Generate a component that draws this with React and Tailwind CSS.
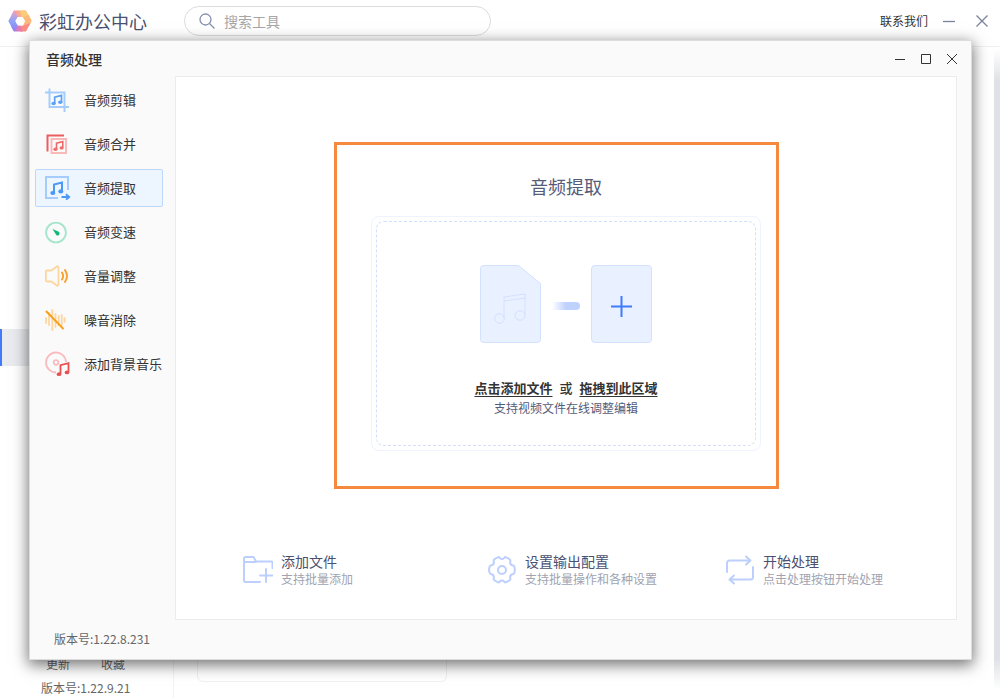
import React, { useState } from "react";

function Logo() {
  return (
    <svg width="24" height="24" viewBox="0 0 24 24">
      <defs>
        <linearGradient id="warm" x1="0" y1="0" x2="1" y2="0">
          <stop offset="0" stopColor="#f793a4" />
          <stop offset="1" stopColor="#fcbf78" />
        </linearGradient>
        <linearGradient id="cool" x1="0" y1="0" x2="0" y2="1">
          <stop offset="0" stopColor="#f3a0c0" />
          <stop offset="0.5" stopColor="#8fa5f8" />
          <stop offset="1" stopColor="#8a7cf2" />
        </linearGradient>
        <linearGradient id="base" x1="0" y1="0" x2="1" y2="0">
          <stop offset="0" stopColor="#a277f0" />
          <stop offset="1" stopColor="#f7809a" />
        </linearGradient>
      </defs>
      <path d="M6 1.500h12l-3 6.500H9L3.500 6z" fill="url(#warm)" />
      <path d="M12 1.500h6l5.500 9.500-7.500 1-2.500-4z" fill="#fccb7c" />
      <path d="M20.500 6l3.200 6L21 17l-6-.5 2-4.500-2-4z" fill="#fdb97c" />
      <path d="M22.500 14L18 22.500h-6L10 16.500h4.500z" fill="#f98d86" />
      <path d="M15 22.500H6L3 17.500l6-3 1.500 2H13z" fill="url(#base)" />
      <path d="M6 1.500L.3 12 6 22.500l3.500-6L7.500 12 10 8z" fill="url(#cool)" />
      <path d="M9.800 8h4.900l2.300 4-2.300 4.500H9.800L7.400 12z" fill="#fff" />
    </svg>
  );
}

function CutIcon() {
  return (
    <svg width="24" height="24" viewBox="0 0 24 24" fill="none">
      <path d="M4.500.500v18.500H24M0 4.500h19.500V24" stroke="#a5cdfb" strokeWidth="2" />
      <path d="M9.700 15.500V9.200l6.800-1.800v6.600" stroke="#5aa2f8" strokeWidth="1.700" />
      <ellipse cx="8.600" cy="15.500" rx="2.200" ry="1.800" fill="#5aa2f8" />
      <ellipse cx="15.300" cy="14.200" rx="2.200" ry="1.800" fill="#5aa2f8" />
    </svg>
  );
}

function MergeIcon() {
  return (
    <svg width="24" height="24" viewBox="0 0 24 24" fill="none">
      <path d="M2.500 19.500v-16H19" stroke="#ee5d5d" strokeWidth="2" />
      <rect x="6.500" y="7" width="14.500" height="14" stroke="#f9b9b9" strokeWidth="2" />
      <path d="M11.500 17v-5.800l6.300-1.600v6" stroke="#f26b6b" strokeWidth="1.600" />
      <ellipse cx="10.500" cy="17.200" rx="2.100" ry="1.700" fill="#f26b6b" />
      <ellipse cx="16.600" cy="15.900" rx="2.100" ry="1.700" fill="#f26b6b" />
    </svg>
  );
}

function ExtractIcon() {
  return (
    <svg width="26" height="24" viewBox="0 0 26 24" fill="none">
      <path d="M23 14V1H1v21h12" stroke="#a5cdfb" strokeWidth="2" />
      <path d="M9 17.200V8.600l8-2v8.800" stroke="#4b98f7" strokeWidth="2" />
      <ellipse cx="7.800" cy="17" rx="2.500" ry="2.100" fill="#4b98f7" />
      <ellipse cx="15.800" cy="15.400" rx="2.500" ry="2.100" fill="#4b98f7" />
      <path d="M16.500 21h7.500m-3-2.700l3.200 2.700-3.200 2.700" stroke="#4b98f7" strokeWidth="1.800" />
    </svg>
  );
}

function SpeedIcon() {
  return (
    <svg width="24" height="24" viewBox="0 0 24 24" fill="none">
      <circle cx="11" cy="12.500" r="9.900" stroke="#a5e5cb" strokeWidth="1.800" />
      <path d="M7.500 9l6.300 2.800a1.900 1.900 0 01-2.500 3.200z" fill="#12b877" />
    </svg>
  );
}

function VolumeIcon() {
  return (
    <svg width="24" height="24" viewBox="0 0 24 24" fill="none" strokeLinecap="round" strokeLinejoin="round">
      <path
        d="M2 6.500h4.500l5.300-4c.8-.6 1.700 0 1.700 1v17c0 1-.9 1.600-1.700 1l-5.300-4H2A1.200 1.200 0 01.900 16V7.800A1.200 1.200 0 012 6.500z"
        stroke="#fcd6a0"
        strokeWidth="1.800"
      />
      <path d="M17 8.500q2.200 3.500 0 7M20 6q4 6 0 12" stroke="#fa9f2a" strokeWidth="1.900" />
    </svg>
  );
}

function NoiseIcon() {
  return (
    <svg width="24" height="24" viewBox="0 0 24 24" fill="none" strokeLinecap="round">
      <path
        d="M1 10v5M4 5v12M7.300 2v20M10.500 6v13M13.700 8v9M16.700 7v10M19.500 10v4"
        stroke="#fcd6a0"
        strokeWidth="1.800"
      />
      <path d="M1.500 3.500l16.500 17" stroke="#fa9f1a" strokeWidth="1.900" />
    </svg>
  );
}

function MusicIcon() {
  return (
    <svg width="26" height="26" viewBox="0 0 26 26" fill="none">
      <path d="M21 11A10 10 0 1011 21.500" stroke="#f8bcc0" strokeWidth="1.800" />
      <circle cx="11" cy="11.500" r="2.300" stroke="#f8bcc0" strokeWidth="1.700" />
      <path d="M15.500 23v-8.800l8-2v9" stroke="#e8504f" strokeWidth="1.800" />
      <ellipse cx="14" cy="23.200" rx="2.300" ry="1.900" fill="#e8504f" />
      <ellipse cx="22" cy="21.400" rx="2.300" ry="1.900" fill="#e8504f" />
    </svg>
  );
}

const menu = [
  { name: "音频剪辑", icon: <CutIcon /> },
  { name: "音频合并", icon: <MergeIcon /> },
  { name: "音频提取", icon: <ExtractIcon /> },
  { name: "音频变速", icon: <SpeedIcon /> },
  { name: "音量调整", icon: <VolumeIcon /> },
  { name: "噪音消除", icon: <NoiseIcon /> },
  { name: "添加背景音乐", icon: <MusicIcon /> },
];

const steps = [
  {
    title: "添加文件",
    text: "支持批量添加",
    icon: (
      <>
        <path d="M17 27H2.500A1.500 1.500 0 011 25.500v-22A1.500 1.500 0 012.500 2h8L13 6.500h15.500a1 1 0 011 1V13M1 7h12" />
        <path d="M23 14v13M17 20.500h13" />
      </>
    ),
  },
  {
    title: "设置输出配置",
    text: "支持批量操作和各种设置",
    icon: (
      <>
        <path d="M10.500 2.500q1.500-.9 2.500.6 2 2 4 0 1-1.500 2.500-.6l3 1.700q1.300.9.700 2.300-.5 3.200 2.300 3.800 1.800.1 2 1.700l.3 3-.3 2.500q-.2 1.600-2 1.700-2.800.6-2.300 3.800.6 1.400-.7 2.300l-3 1.700q-1.500.9-2.500-.6-2-2-4 0-1 1.500-2.500.6l-3-1.700q-1.300-.9-.7-2.300.5-3.200-2.300-3.800-1.800-.1-2-1.700L2 15l.5-3q.2-1.600 2-1.700 2.800-.6 2.300-3.800-.6-1.400.7-2.300z" />
        <circle cx="15" cy="15" r="4" />
      </>
    ),
  },
  {
    title: "开始处理",
    text: "点击处理按钮开始处理",
    icon: (
      <>
        <path d="M2 17V8a2.500 2.500 0 012.500-2.500H25M21 1.500l4.500 4-4.500 4" />
        <path d="M28 12v10a2.500 2.500 0 01-2.500 2.500H5M9 20.500l-4.500 4 4.500 4" />
      </>
    ),
  },
];

function AudioWindow() {
  const [active, setActive] = useState("音频提取");

  return (
    <section className="absolute top-[40px] right-[28px] bottom-[38px] left-[29px] flex flex-col border border-[#dcdcdc] bg-[#fafafa] shadow-[0_4px_14px_1px_rgba(0,0,0,0.55)]">
      <div className="flex h-[35px] shrink-0 items-center justify-between pr-[13px] pl-4">
        <h2 className="text-sm font-medium text-[#333]">音频处理</h2>
        <div className="flex items-center gap-[14px] text-[#333]">
          <button aria-label="最小化">
            <svg width="12" height="12" stroke="currentColor">
              <path d="M1 6.500h10" />
            </svg>
          </button>
          <button aria-label="最大化">
            <svg width="12" height="12" stroke="currentColor" fill="none">
              <path d="M1.500 1.500h9v9h-9z" />
            </svg>
          </button>
          <button aria-label="关闭">
            <svg width="12" height="12" stroke="currentColor">
              <path d="M1 1l10 10M11 1L1 11" />
            </svg>
          </button>
        </div>
      </div>

      <div className="flex flex-1">
        <nav className="flex w-[145px] shrink-0 flex-col gap-[6px] pt-[5px] pr-3 pl-[5px]">
          {menu.map((item) => (
            <button
              key={item.name}
              onClick={() => setActive(item.name)}
              className={
                item.name === active
                  ? "flex h-[38px] items-center rounded-xs border border-[#bbd8fb] bg-[#edf5ff] pl-[9px] text-[13px] whitespace-nowrap text-[#333]"
                  : "flex h-[38px] items-center rounded-xs border border-transparent pl-[9px] text-[13px] whitespace-nowrap text-[#333]"
              }
            >
              <span className="w-[39px] shrink-0">{item.icon}</span>
              {item.name}
            </button>
          ))}
        </nav>

        <main className="mr-[14px] flex flex-1 flex-col border border-[#ececec] bg-white">
          <div className="mt-[95px] flex justify-center">
            <div className="relative w-1/2">
              <h1 className="text-center text-lg text-[#555b78]">音频提取</h1>
              <div className="mt-4 rounded-lg border border-[#eff3fe] p-1">
                <div className="flex flex-col items-center rounded-lg border border-dashed border-[#d3dffc] pt-[43px] pb-[27px]">
                  <div className="flex items-center gap-[11px]">
                    <svg width="61" height="78" viewBox="0 0 61 78" fill="none" stroke="#d3e0fe">
                      <path
                        d="M3.500.500h35l22 18v56a3 3 0 01-3 3h-54a3 3 0 01-3-3v-71a3 3 0 013-3z"
                        fill="#e9f0ff"
                      />
                      <circle cx="19.500" cy="53.500" r="4.800" />
                      <circle cx="40" cy="50.500" r="4.800" />
                      <path d="M24 53V32l21-3v21M24 36l21-3" />
                    </svg>
                    <span className="mt-1 h-2 w-7 rounded-r-full bg-linear-to-r from-white via-[#bfd2fd] via-50% to-[#bfd2fd]"></span>
                    <button
                      aria-label="添加文件"
                      className="flex h-[78px] w-[61px] items-center justify-center rounded-sm border border-[#d3e0fe] bg-[#e9f0ff] pt-1"
                    >
                      <svg width="21" height="21" stroke="#3f7bfb" strokeWidth="2">
                        <path d="M10.500 0v21M0 10.500h21" />
                      </svg>
                    </button>
                  </div>
                  <p className="mt-[35px] flex items-center gap-[7px] text-[13px] leading-5 font-bold text-[#333]">
                    <a href="#add" className="underline underline-offset-3">
                      点击添加文件
                    </a>
                    <span className="font-medium">或</span>
                    <a href="#drop" className="underline underline-offset-3">
                      拖拽到此区域
                    </a>
                  </p>
                  <p className="text-xs leading-5 text-[#555b78]">支持视频文件在线调整编辑</p>
                </div>
              </div>
              <div className="pointer-events-none absolute -top-[30px] -right-[18px] -bottom-[38px] -left-[37px] border-3 border-[#f58a3f]"></div>
            </div>
          </div>

          <ul className="mt-auto mb-[31px] grid grid-cols-[244fr_238fr_231fr] pl-[67px]">
            {steps.map((step) => (
              <li key={step.title} className="flex items-center gap-2">
                <svg
                  width="30"
                  height="30"
                  viewBox="0 0 30 30"
                  fill="none"
                  stroke="#bccffd"
                  strokeWidth="2"
                  strokeLinecap="round"
                  strokeLinejoin="round"
                >
                  {step.icon}
                </svg>
                <div>
                  <h3 className="text-sm leading-[18px] text-[#4a5070]">{step.title}</h3>
                  <p className="text-xs leading-[18px] text-[#a0a3b0]">{step.text}</p>
                </div>
              </li>
            ))}
          </ul>
        </main>
      </div>

      <footer className="flex h-[39px] shrink-0 items-center px-6 pb-[2px] text-xs text-[#666]">版本号:1.22.8.231</footer>
    </section>
  );
}

function App() {
  return (
    <div className="relative flex h-screen flex-col overflow-hidden bg-white font-['Noto_Sans_CJK_SC',sans-serif]">
      <header className="flex h-[47px] shrink-0 items-center border-b border-[#f0f0f0] pr-3 pb-[4px] pl-2">
        <Logo />
        <span className="ml-[7px] text-lg text-[#4a5070]">彩虹办公中心</span>
        <label className="ml-[37px] flex h-[30px] w-[307px] items-center gap-[9px] rounded-full border border-[#dcdcdc] pl-[14px]">
          <svg width="16" height="16" fill="none" stroke="#8791ae" strokeWidth="1.300" className="shrink-0">
            <circle cx="6.500" cy="6.500" r="5.500" />
            <path d="M10.500 10.500l5 5" />
          </svg>
          <input
            type="text"
            aria-label="搜索工具"
            placeholder="搜索工具"
            className="w-full bg-transparent text-sm outline-none placeholder:text-[#a6a6a6]"
          />
        </label>
        <a href="#contact" className="ml-auto text-xs text-[#333]">
          联系我们
        </a>
        <button aria-label="最小化" className="ml-[15px]">
          <svg width="12" height="12" stroke="#7b829c" strokeWidth="1.300">
            <path d="M0 6.500h12" />
          </svg>
        </button>
        <button aria-label="关闭" className="ml-[21px]">
          <svg width="12" height="12" stroke="#7b829c" strokeWidth="1.300">
            <path d="M.500.500l11 11M11.500.500l-11 11" />
          </svg>
        </button>
      </header>

      <div className="flex flex-1">
        <aside className="flex w-[174px] flex-col border-r border-[#f3f3f3] pt-[282px] text-xs text-[#666]">
          <div className="h-[37px] border-l-2 border-[#3f7bfb] bg-[#e9ebef]"></div>
          <div className="mt-auto flex gap-[31px] pl-[46px]">
            <a href="#update">更新</a>
            <a href="#favorite">收藏</a>
          </div>
          <p className="mt-2 mb-[2px] pl-[41px]">版本号:1.22.9.21</p>
        </aside>
        <div className="flex flex-1 px-[23px] pb-4">
          <div className="w-[250px] rounded-md border border-[#f0f0f0]"></div>
        </div>
        <div className="mt-[2px] mb-2 w-[6px] bg-linear-to-b from-transparent via-[#dfe1e6] via-5% to-[#dfe1e6] mask-b-from-95%"></div>
      </div>

      <AudioWindow />
    </div>
  );
}

export default App;
